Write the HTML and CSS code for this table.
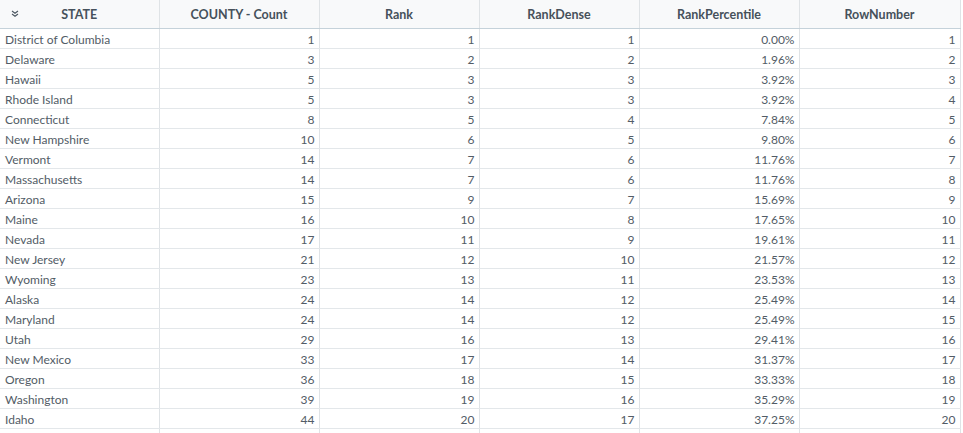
FILE: index.html
```html
<!DOCTYPE html>
<html>
<head>
<meta charset="utf-8">
<link rel="stylesheet" href="styles.css">
</head>
<body>
<div class="grid">
<table class="tbl">
<colgroup><col class="c1"><col class="c"><col class="c"><col class="c"><col class="c"><col class="c6"></colgroup>
<thead>
<tr>
<th class="first"><span class="chev"><svg width="8" height="7" viewBox="0 0 8 7"><path d="M1 1 L4 3.2 L7 1 M1 4 L4 6.2 L7 4" fill="none" stroke="#4a5560" stroke-width="1.1"/></svg></span>STATE</th>
<th>COUNTY - Count</th>
<th>Rank</th>
<th>RankDense</th>
<th>RankPercentile</th>
<th>RowNumber</th>
</tr>
</thead>
<tbody>
<tr><td class="s">District of Columbia</td><td>1</td><td>1</td><td>1</td><td>0.00%</td><td>1</td></tr>
<tr><td class="s">Delaware</td><td>3</td><td>2</td><td>2</td><td>1.96%</td><td>2</td></tr>
<tr><td class="s">Hawaii</td><td>5</td><td>3</td><td>3</td><td>3.92%</td><td>3</td></tr>
<tr><td class="s">Rhode Island</td><td>5</td><td>3</td><td>3</td><td>3.92%</td><td>4</td></tr>
<tr><td class="s">Connecticut</td><td>8</td><td>5</td><td>4</td><td>7.84%</td><td>5</td></tr>
<tr><td class="s">New Hampshire</td><td>10</td><td>6</td><td>5</td><td>9.80%</td><td>6</td></tr>
<tr><td class="s">Vermont</td><td>14</td><td>7</td><td>6</td><td>11.76%</td><td>7</td></tr>
<tr><td class="s">Massachusetts</td><td>14</td><td>7</td><td>6</td><td>11.76%</td><td>8</td></tr>
<tr><td class="s">Arizona</td><td>15</td><td>9</td><td>7</td><td>15.69%</td><td>9</td></tr>
<tr><td class="s">Maine</td><td>16</td><td>10</td><td>8</td><td>17.65%</td><td>10</td></tr>
<tr><td class="s">Nevada</td><td>17</td><td>11</td><td>9</td><td>19.61%</td><td>11</td></tr>
<tr><td class="s">New Jersey</td><td>21</td><td>12</td><td>10</td><td>21.57%</td><td>12</td></tr>
<tr><td class="s">Wyoming</td><td>23</td><td>13</td><td>11</td><td>23.53%</td><td>13</td></tr>
<tr><td class="s">Alaska</td><td>24</td><td>14</td><td>12</td><td>25.49%</td><td>14</td></tr>
<tr><td class="s">Maryland</td><td>24</td><td>14</td><td>12</td><td>25.49%</td><td>15</td></tr>
<tr><td class="s">Utah</td><td>29</td><td>16</td><td>13</td><td>29.41%</td><td>16</td></tr>
<tr><td class="s">New Mexico</td><td>33</td><td>17</td><td>14</td><td>31.37%</td><td>17</td></tr>
<tr><td class="s">Oregon</td><td>36</td><td>18</td><td>15</td><td>33.33%</td><td>18</td></tr>
<tr><td class="s">Washington</td><td>39</td><td>19</td><td>16</td><td>35.29%</td><td>19</td></tr>
<tr><td class="s">Idaho</td><td>44</td><td>20</td><td>17</td><td>37.25%</td><td>20</td></tr>
<tr class="filler"><td></td><td></td><td></td><td></td><td></td><td></td></tr>
</tbody>
</table>
</div>
</body>
</html>
```

FILE: styles.css
```css
html, body {
  margin: 0;
  padding: 0;
  background: #ffffff;
  overflow: hidden;
}
.grid {
  width: 961px;
  height: 433px;
  overflow: hidden;
}
.tbl {
  border-collapse: collapse;
  table-layout: fixed;
  width: 960px;
  font-family: Lato, "Liberation Sans", sans-serif;
  font-size: 12px;
  color: #525c66;
}
.c1 { width: 159px; }
.c { width: 160px; }
.c6 { width: 161px; }
th {
  height: 28px;
  padding: 0;
  background: #f8f9fa;
  border-right: 1px solid #dfe3e6;
  border-bottom: 1px solid #c5d2da;
  font-weight: 700;
  font-size: 12.5px;
  color: #46515b;
  text-align: center;
  vertical-align: middle;
}
th.first { position: relative; }
.chev {
  position: absolute;
  left: 11px;
  top: 10px;
  line-height: 0;
}
td {
  height: 17px;
  padding: 2px 4px 0 5px;
  border-right: 1px solid #dfe3e6;
  border-bottom: 1px solid #e3e7ea;
  text-align: right;
  white-space: nowrap;
  overflow: hidden;
  line-height: 17px;
}
td.s { text-align: left; }
.filler td { border-bottom: none; height: 10px; }
```
